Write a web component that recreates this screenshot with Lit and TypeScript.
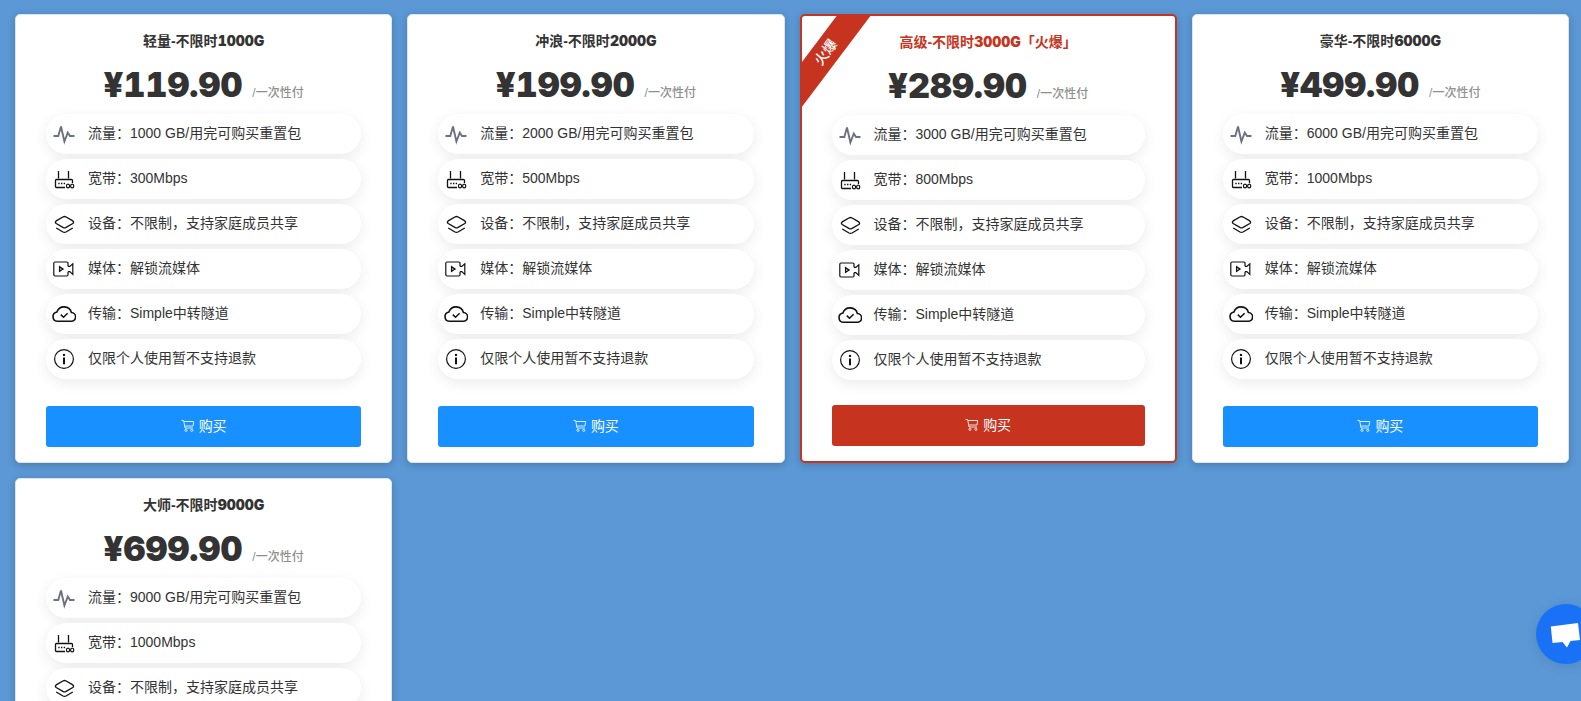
import { LitElement, html, css, svg } from "lit";
import { customElement, property } from "lit/decorators.js";

interface Plan {
  tier: string;
  quota: number;
  price: string;
  speed: string;
  tag?: string;
}

const plans: Plan[] = [
  { tier: "轻量", quota: 1000, price: "119.90", speed: "300Mbps" },
  { tier: "冲浪", quota: 2000, price: "199.90", speed: "500Mbps" },
  { tier: "高级", quota: 3000, price: "289.90", speed: "800Mbps", tag: "火爆" },
  { tier: "豪华", quota: 6000, price: "499.90", speed: "1000Mbps" },
  { tier: "大师", quota: 9000, price: "699.90", speed: "1000Mbps" },
];

const icons = {
  traffic: svg`<path d="M1.5 14H6.3L9 4.5L12.4 19.5L15.8 10.5L18 14H22.5" stroke="#6b7080" stroke-width="1.9"/>`,
  router: svg`<path d="M6.5 4V11.5M16.5 4V11.5" stroke-width="1.3"/>
    <path d="M13 20.5H4.5Q3.5 20.5 3.5 19.5V13.5Q3.5 12.5 4.5 12.5H19.5Q20.5 12.5 20.5 13.5V16" stroke-width="1.3"/>
    <path d="M6.3 16.5h1.4M9 16.5h1.4M11.7 16.5h1.4" stroke-width="1.3"/>
    <ellipse cx="16" cy="19" rx="1.6" ry="1.9" stroke-width="1.2"/>
    <ellipse cx="20.2" cy="19" rx="1.6" ry="1.9" stroke-width="1.2"/>`,
  layers: svg`<path d="M11.3 4.8Q12.5 4.2 13.7 4.8L20.8 8.9Q22.4 10.2 20.8 11.5L13.7 15.6Q12.5 16.2 11.3 15.6L4.2 11.5Q2.6 10.2 4.2 8.9Z" stroke-width="1.3"/>
    <path d="M4.2 16L11 20Q12.5 20.8 14 20L20.8 16" stroke-width="1.3"/>`,
  video: svg`<path d="M16 9.2V6.2Q16 5 14.8 5H3Q1.8 5 1.8 6.2V17.8Q1.8 19 3 19H14.8Q16 19 16 17.8V14.8M16 9.4H17.8L20.8 6.8V17.4L17.8 14.6H16" stroke-width="1.2"/>
    <path d="M7.6 9.8V14.4L11 12.1Z" stroke-width="1.3"/>`,
  cloud: svg`<path d="M5.2 19.3H19A4.4 4.4 0 0 0 19.4 10.5A7.6 7.6 0 0 0 4.9 10A4.7 4.7 0 0 0 5.2 19.3Z" stroke-width="1.6"/>
    <path d="M8.8 12.6L11.5 15.2L15.6 11.2" stroke-width="1.5"/>`,
  info: svg`<circle cx="12" cy="12" r="9.4" stroke-width="1.2"/>
    <circle cx="12" cy="7.9" r="1.2" fill="#111" stroke="none"/>
    <path d="M12 10.6V17.2" stroke-width="2"/>`,
};

@customElement("plan-card")
export class PlanCard extends LitElement {
  @property({ attribute: false }) plan!: Plan;

  static styles = css`
    :host {
      display: flex;
      flex-direction: column;
      box-sizing: border-box;
      position: relative;
      overflow: hidden;
      min-width: 0;
      padding: 16px 30px 15px;
      border: 1px solid #dde4ee;
      border-radius: 5px;
      background: #fff;
      box-shadow: 0 2px 8px rgba(0, 0, 0, 0.2);
      --accent: #1890ff;
    }
    :host([hot]) {
      border: 2px solid #c63420;
      --accent: #c63420;
    }
    .title {
      margin: 0 0 14px;
      font-size: 14px;
      line-height: 20px;
      font-weight: 700;
      text-align: center;
      color: #333;
    }
    :host([hot]) .title {
      color: var(--accent);
    }
    .heavy {
      font-family: Inter, "Liberation Sans", sans-serif;
      font-weight: 900;
      font-variant-numeric: tabular-nums;
    }
    .price {
      display: flex;
      justify-content: center;
      align-items: baseline;
      gap: 10px;
      height: 49px;
      margin: 0;
      line-height: 40px;
      color: #333;
    }
    .amount {
      font-size: 34px;
    }
    .period {
      font-size: 12px;
      font-weight: 500;
      color: #8f8f8f;
    }
    .features {
      display: flex;
      flex-direction: column;
      gap: 5px;
      margin: 0 0 25px;
      padding: 0;
      list-style: none;
    }
    .feature {
      display: flex;
      align-items: center;
      gap: 12px;
      height: 40px;
      padding: 0 6px;
      border-radius: 20px;
      background: #fff;
      box-shadow: 0 4px 14px rgba(0, 0, 0, 0.08);
      font-size: 14px;
      color: #333;
      white-space: nowrap;
    }
    .icon {
      flex: none;
      width: 24px;
      height: 24px;
      fill: none;
      stroke: #111;
    }
    .text {
      line-height: 20px;
      padding-bottom: 2px;
    }
    .buy {
      display: flex;
      justify-content: center;
      align-items: center;
      gap: 4px;
      height: 41px;
      margin: auto 0 0;
      padding: 0 0 3px;
      border: 0;
      border-radius: 3px;
      background: var(--accent);
      color: #fff;
      font: inherit;
      font-size: 14px;
      cursor: pointer;
    }
    .cart {
      width: 14px;
      height: 14px;
      fill: none;
      stroke: #fff;
      opacity: 0.85;
    }
    .ribbon {
      position: absolute;
      left: -46px;
      top: 23px;
      width: 140px;
      transform: rotate(-53deg);
      background: var(--accent);
      color: #fff;
      font-size: 14px;
      font-weight: 500;
      line-height: 27px;
      text-align: center;
    }
  `;

  private feature(icon: unknown, text: string) {
    return html`<li class="feature">
      <svg class="icon" viewBox="0 0 24 24" aria-hidden="true">${icon}</svg>
      <span class="text">${text}</span>
    </li>`;
  }

  render() {
    const p = this.plan;
    return html`
      ${p.tag ? html`<div class="ribbon">${p.tag}</div>` : ""}
      <h2 class="title">${p.tier}-不限时<span class="heavy">${p.quota}G</span>${p.tag ? `「${p.tag}」` : ""}</h2>
      <p class="price">
        <span class="amount heavy">¥${p.price}</span><span class="period">/一次性付</span>
      </p>
      <ul class="features">
        ${this.feature(icons.traffic, `流量：${p.quota} GB/用完可购买重置包`)}
        ${this.feature(icons.router, `宽带：${p.speed}`)}
        ${this.feature(icons.layers, "设备：不限制，支持家庭成员共享")}
        ${this.feature(icons.video, "媒体：解锁流媒体")}
        ${this.feature(icons.cloud, "传输：Simple中转隧道")}
        ${this.feature(icons.info, "仅限个人使用暂不支持退款")}
      </ul>
      <button class="buy" type="button">
        <svg class="cart" viewBox="0 0 14 14" aria-hidden="true">
          <path d="M0.5 2.5H2.7L4 10H12M3 3.5H12.7L12 8H3.8" />
          <circle cx="5" cy="12.3" r="1.1" />
          <circle cx="10.8" cy="12.3" r="1.1" />
        </svg>
        <span>购买</span>
      </button>
    `;
  }
}

@customElement("app-root")
export class AppRoot extends LitElement {
  static styles = css`
    :host {
      display: block;
      box-sizing: border-box;
      min-height: 100vh;
      padding: 14px 12px 15px 15px;
      background: #5b98d5;
      font-family: "Liberation Sans", "Noto Sans CJK SC", sans-serif;
    }
    .grid {
      display: grid;
      grid-template-columns: repeat(auto-fill, minmax(320px, 1fr));
      gap: 15px;
    }
    .chat {
      position: fixed;
      right: -15px;
      bottom: 37px;
      width: 60px;
      height: 60px;
      padding: 0;
      border: 0;
      border-radius: 50%;
      background: #1972f5;
      box-shadow: 0 2px 12px rgba(0, 0, 0, 0.1);
      cursor: pointer;
    }
    .bubble {
      display: block;
      width: 60px;
      height: 60px;
    }
  `;

  render() {
    return html`
      <main class="grid">
        ${plans.map((p) => html`<plan-card .plan=${p} ?hot=${!!p.tag}></plan-card>`)}
      </main>
      <button class="chat" type="button" aria-label="在线客服">
        <svg class="bubble" viewBox="0 0 60 60" aria-hidden="true">
          <path d="M14.8 22.5L42 19L44 36L34.5 37L31 43.5L26.5 38L16.5 39Z" fill="#fff" />
        </svg>
      </button>
    `;
  }
}
